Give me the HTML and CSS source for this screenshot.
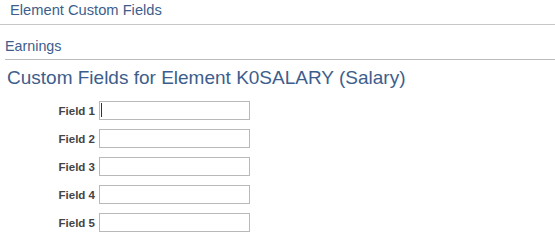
FILE: index.html
```html
<!DOCTYPE html>
<html>
<head>
<meta charset="utf-8">
<link rel="stylesheet" href="styles.css">
</head>
<body>
<div class="page-title">Element Custom Fields</div>
<div class="section">
  <div class="section-title">Earnings</div>
</div>
<h1 class="heading">Custom Fields for Element K0SALARY (Salary)</h1>
<div class="form">
  <label class="lbl" for="f1">Field 1</label>
  <span class="field"><input id="f1" type="text"><span class="caret"></span></span>
  <label class="lbl" for="f2">Field 2</label>
  <span class="field"><input id="f2" type="text"></span>
  <label class="lbl" for="f3">Field 3</label>
  <span class="field"><input id="f3" type="text"></span>
  <label class="lbl" for="f4">Field 4</label>
  <span class="field"><input id="f4" type="text"></span>
  <label class="lbl" for="f5">Field 5</label>
  <span class="field"><input id="f5" type="text"></span>
</div>
</body>
</html>
```

FILE: styles.css
```css
html, body {
  margin: 0;
  padding: 0;
  background: #ffffff;
  font-family: "Liberation Sans", Arial, sans-serif;
}
.page-title {
  height: 24px;
  padding-left: 10px;
  font-size: 14.7px;
  line-height: 20px;
  color: #3d5e8c;
  border-bottom: 1px solid #c8c8c8;
}
.section {
  margin: 11px 0 0 5px;
  padding-bottom: 3px;
  border-bottom: 1px solid #bdbdbd;
}
.section-title {
  font-size: 14.3px;
  line-height: 20px;
  color: #3d5e8c;
}
.heading {
  margin: 7px 0 0 7px;
  font-size: 19px;
  line-height: 22px;
  font-weight: normal;
  color: #3d5e8c;
}
.form {
  margin-top: 12px;
  display: grid;
  grid-template-columns: 95px 151px;
  column-gap: 4px;
  row-gap: 9px;
  align-items: center;
}
.lbl {
  text-align: right;
  font-size: 11.5px;
  font-weight: bold;
  color: #444444;
}
.field {
  position: relative;
  display: block;
  height: 19px;
}
.field input {
  display: block;
  box-sizing: border-box;
  width: 151px;
  height: 19px;
  margin: 0;
  padding: 0 2px;
  border: 1px solid #b9b9b9;
  border-radius: 0;
  outline: none;
  background: #ffffff;
  font-family: "Liberation Sans", Arial, sans-serif;
  font-size: 12px;
}
.caret {
  position: absolute;
  left: 2px;
  top: 2px;
  width: 1px;
  height: 14px;
  background: #333333;
}
```
